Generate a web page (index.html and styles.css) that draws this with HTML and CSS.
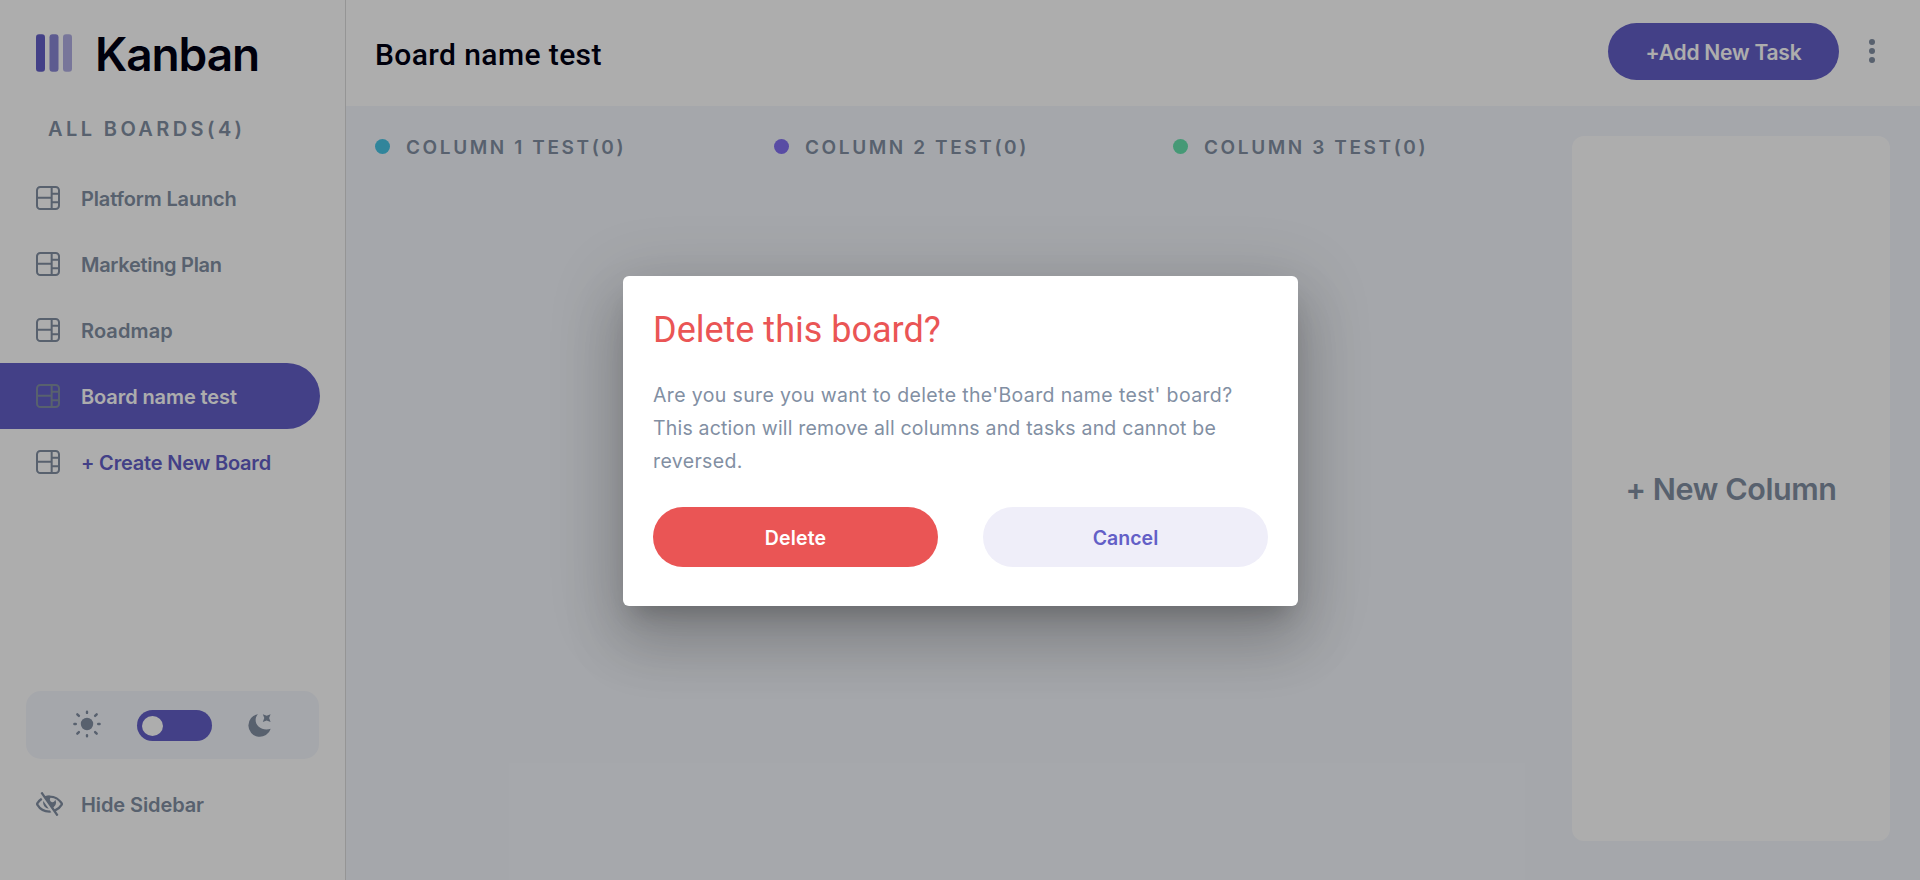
FILE: index.html
```html
<!DOCTYPE html>
<html lang="en">
<head>
<meta charset="utf-8">
<title>Kanban</title>
<link rel="stylesheet" href="styles.css">
</head>
<body>
<svg class="defs" width="0" height="0">
  <symbol id="board" viewBox="0 0 16 16">
    <path fill="currentColor" d="M0 2.889A2.889 2.889 0 0 1 2.889 0H13.11A2.889 2.889 0 0 1 16 2.889V13.11A2.888 2.888 0 0 1 13.111 16H2.89A2.889 2.889 0 0 1 0 13.111V2.89Zm1.333 5.555v4.667c0 .859.697 1.556 1.556 1.556h6.889V8.444H1.333Zm8.445-1.333V1.333h-6.89A1.556 1.556 0 0 0 1.334 2.89V7.11h8.445Zm4.889-1.333H11.11v4.444h3.556V5.778Zm0 5.778H11.11v3.11h2a1.556 1.556 0 0 0 1.556-1.555v-1.555Zm0-7.112V2.89a1.555 1.555 0 0 0-1.556-1.556h-2v3.111h3.556Z"/>
  </symbol>
</svg>
<div class="app">
  <aside class="sidebar">
    <div class="logo">
      <svg class="logo-mark" viewBox="0 0 24 25" width="36" height="38">
        <g fill="#635FC7"><rect width="6" height="25" rx="2"/><rect opacity=".75" x="9" width="6" height="25" rx="2"/><rect opacity=".5" x="18" width="6" height="25" rx="2"/></g>
      </svg>
      <span class="logo-text">Kanban</span>
    </div>
    <h2 class="boards-title">ALL BOARDS(4)</h2>
    <nav class="boards">
      <a class="board"><svg class="board-icon"><use href="#board"/></svg><span class="t-platform">Platform Launch</span></a>
      <a class="board"><svg class="board-icon"><use href="#board"/></svg><span class="t-marketing">Marketing Plan</span></a>
      <a class="board"><svg class="board-icon"><use href="#board"/></svg><span class="t-roadmap">Roadmap</span></a>
      <a class="board active"><svg class="board-icon"><use href="#board"/></svg><span class="t-board">Board name test</span></a>
      <a class="board create"><svg class="board-icon"><use href="#board"/></svg><span class="t-create">+ Create New Board</span></a>
    </nav>
    <div class="theme">
      <svg class="sun" viewBox="0 0 28 28" width="28" height="28">
        <circle cx="14" cy="14" r="6.2" fill="#828FA3"/>
        <g stroke="#828FA3" stroke-width="2.4" stroke-linecap="round"><path d="M14 1.7v1.2M14 25.1v1.2M1.4 14h1.4M25.2 14h1.4M4.3 4.3l1.6 1.6M22.1 22.1l1.6 1.6M4.3 23.7l1.6-1.6M22.1 5.900l1.600-1.600"/></g>
      </svg>
      <div class="toggle"><span class="knob"></span></div>
      <svg class="moon" viewBox="0 0 23 23" width="23" height="23">
        <path fill="#828FA3" d="M10 .2C6.600 3.600 6.900 9.500 10.500 12.600C13.800 15.500 18.600 16.200 22.700 14.700A11.400 11.400 0 1 1 10 .2Z"/>
        <path fill="#828FA3" d="M14.800.2l3.900 1.500L22.600.2l-1.500 3.900L22.600 8l-3.900-1.500L14.800 8l1.500-3.900Z"/>
      </svg>
    </div>
    <a class="hide">
      <svg viewBox="0 0 18 16" width="27" height="24">
        <path fill="#828FA3" d="M8.522 11.223a4.252 4.252 0 0 1-3.654-5.22l3.654 5.22ZM9 12.250A8.685 8.685 0 0 1 1.500 8a8.612 8.612 0 0 1 2.760-2.864l-.86-1.230A10.112 10.112 0 0 0 .208 7.238a1.500 1.500 0 0 0 0 1.524A10.187 10.187 0 0 0 9 13.750c.414 0 .828-.025 1.239-.074l-1-1.430A8.880 8.880 0 0 1 9 12.250Zm8.792-3.488a10.140 10.140 0 0 1-4.486 4.046l1.504 2.148a.375.375 0 0 1-.092.523l-.648.453a.375.375 0 0 1-.523-.092L3.190 1.044A.375.375 0 0 1 3.282.520L3.930.068a.375.375 0 0 1 .523.092l1.735 2.479A10.308 10.308 0 0 1 9 2.250c3.746 0 7.031 2 8.792 4.988a1.500 1.500 0 0 1 0 1.524ZM16.500 8a8.674 8.674 0 0 0-6.755-4.219A1.750 1.750 0 1 0 12.750 5v-.001a4.250 4.250 0 0 1-1.154 5.366l.834 1.192A8.641 8.641 0 0 0 16.500 8Z"/>
      </svg>
      <span>Hide Sidebar</span>
    </a>
  </aside>
  <main class="main">
    <header class="header">
      <h1 class="title">Board name test</h1>
      <button class="add"><span>+Add New Task</span></button>
      <svg class="more" viewBox="0 0 6 24" width="6" height="24"><g fill="#828FA3"><circle cx="3" cy="3" r="3"/><circle cx="3" cy="12" r="3"/><circle cx="3" cy="21" r="3"/></g></svg>
    </header>
    <div class="columns">
      <section class="column"><i class="dot cyan"></i><h3>COLUMN 1 TEST(0)</h3></section>
      <section class="column"><i class="dot violet"></i><h3>COLUMN 2 TEST(0)</h3></section>
      <section class="column"><i class="dot green"></i><h3>COLUMN 3 TEST(0)</h3></section>
      <section class="new-column"><span>+ New Column</span></section>
    </div>
  </main>
</div>
<div class="overlay">
  <div class="modal">
    <h2 class="modal-title">Delete this board?</h2>
    <p class="modal-text"><span class="l1">Are you sure you want to delete the'Board name test' board?</span><br><span class="l2">This action will remove all columns and tasks and cannot be</span><br><span class="l1">reversed.</span></p>
    <div class="actions"><button class="btn delete">Delete</button><button class="btn cancel">Cancel</button></div>
  </div>
</div>
</body>
</html>
```
FILE: styles.css
```css
* { box-sizing: border-box; margin: 0; padding: 0; }
body { height: 880px; overflow: hidden; font-family: Inter, "Open Sans", sans-serif; color: #828fa3; }
button { border: 0; font-family: inherit; }
span, h1, h2, h3 { white-space: nowrap; }
.defs { position: absolute; }
.app { display: flex; height: 880px; background: #fff; }

.sidebar { width: 346px; flex: none; border-right: 1px solid #dcdcdc; display: flex; flex-direction: column; }
.logo { display: flex; align-items: center; height: 38px; margin: 34px 0 0 36px; }
.logo-text { margin-left: 23px; padding-top: 1px; font-size: 46px; font-weight: 600; line-height: 56px; letter-spacing: -1.1px; color: #000112; }
.boards-title { margin: 44px 0 0 48px; height: 26px; font-size: 20px; line-height: 26px; font-weight: 600; letter-spacing: 3.4px; }
.boards { margin-top: 23px; }
.board { display: flex; align-items: center; height: 66px; width: 320px; padding-left: 36px; font-size: 20px; font-weight: 600; letter-spacing: -0.15px; }
.board span, .hide span { padding-top: 2px; }
.board-icon { width: 24px; height: 24px; margin-right: 21px; color: #828fa3; }
.t-marketing { letter-spacing: -0.3px; }
.t-roadmap { letter-spacing: 0.1px; }
.t-board { letter-spacing: -0.1px; }
.t-create { letter-spacing: -0.2px; }
.active { background: #635fc7; color: #fff; border-radius: 0 33px 33px 0; }
.create { color: #635fc7; }
.theme { display: flex; align-items: center; width: 293px; height: 68px; margin: 196px 0 0 26px; padding: 1px 0 0 47px; background: #f4f7fd; border-radius: 15px; }
.sun { margin-bottom: 3px; }
.toggle { display: flex; align-items: center; width: 75px; height: 31px; margin-left: 36px; padding-left: 5px; background: #635fc7; border-radius: 16px; }
.knob { width: 21px; height: 20px; border-radius: 50%; background: #fff; }
.moon { margin-left: 36px; }
.hide { display: flex; align-items: center; gap: 18px; height: 30px; margin: 30px 0 0 36px; font-size: 20px; font-weight: 600; letter-spacing: -0.1px; }

.main { flex: 1; display: flex; flex-direction: column; background: #f4f7fd; }
.header { display: flex; align-items: center; height: 106px; padding: 0 45px 4px 29px; background: #fff; }
.title { flex: 1; padding-top: 8px; font: 500 30px/40px Roboto, sans-serif; letter-spacing: 0.4px; color: #000112; }
.add { width: 231px; height: 57px; padding-top: 2px; border-radius: 29px; background: #635fc7; color: #fff; font-size: 21px; font-weight: 600; letter-spacing: -0.22px; }
.more { margin-left: 30px; }
.columns { flex: 1; display: flex; padding: 30px 30px 39px 29px; }
.column { display: flex; align-items: center; height: 21px; width: 399px; }
.dot { width: 15px; height: 15px; border-radius: 50%; margin-right: 16px; }
.cyan { background: #49c4e5; }
.violet { background: #8471f2; }
.green { background: #67e2ae; }
.column h3 { padding-top: 2px; font-size: 19px; line-height: 24px; font-weight: 600; letter-spacing: 2.6px; }
.new-column { width: 318px; margin-left: auto; display: flex; align-items: center; justify-content: center; background: #fff; border-radius: 12px; font-size: 30.5px; font-weight: 600; letter-spacing: -0.4px; }

.overlay { position: absolute; inset: 0; display: flex; align-items: center; justify-content: center; padding: 2px 0 0 1px; background: rgba(0, 0, 0, 0.32); }
.modal { width: 675px; height: 330px; padding: 30px; border-radius: 6px; background: #fff; box-shadow: 0 16.5px 22.5px -10.5px rgba(0,0,0,.2), 0 36px 57px 4.5px rgba(0,0,0,.14), 0 13.5px 69px 12px rgba(0,0,0,.12); }
.modal-title { font: 400 36px/48px Roboto, sans-serif; color: #ea5555; }
.modal-text { margin-top: 25px; font-size: 19.5px; line-height: 33px; }
.l1 { letter-spacing: 0.36px; }
.l2 { letter-spacing: 0.19px; }
.actions { display: flex; justify-content: space-between; margin-top: 29px; }
.btn { width: 285px; height: 60px; padding-top: 2px; border-radius: 30px; font-size: 19.5px; font-weight: 600; letter-spacing: 0; }
.delete { background: #ea5555; color: #fff; letter-spacing: 0.2px; }
.cancel { background: #efeef9; color: #635fc7; }
```
